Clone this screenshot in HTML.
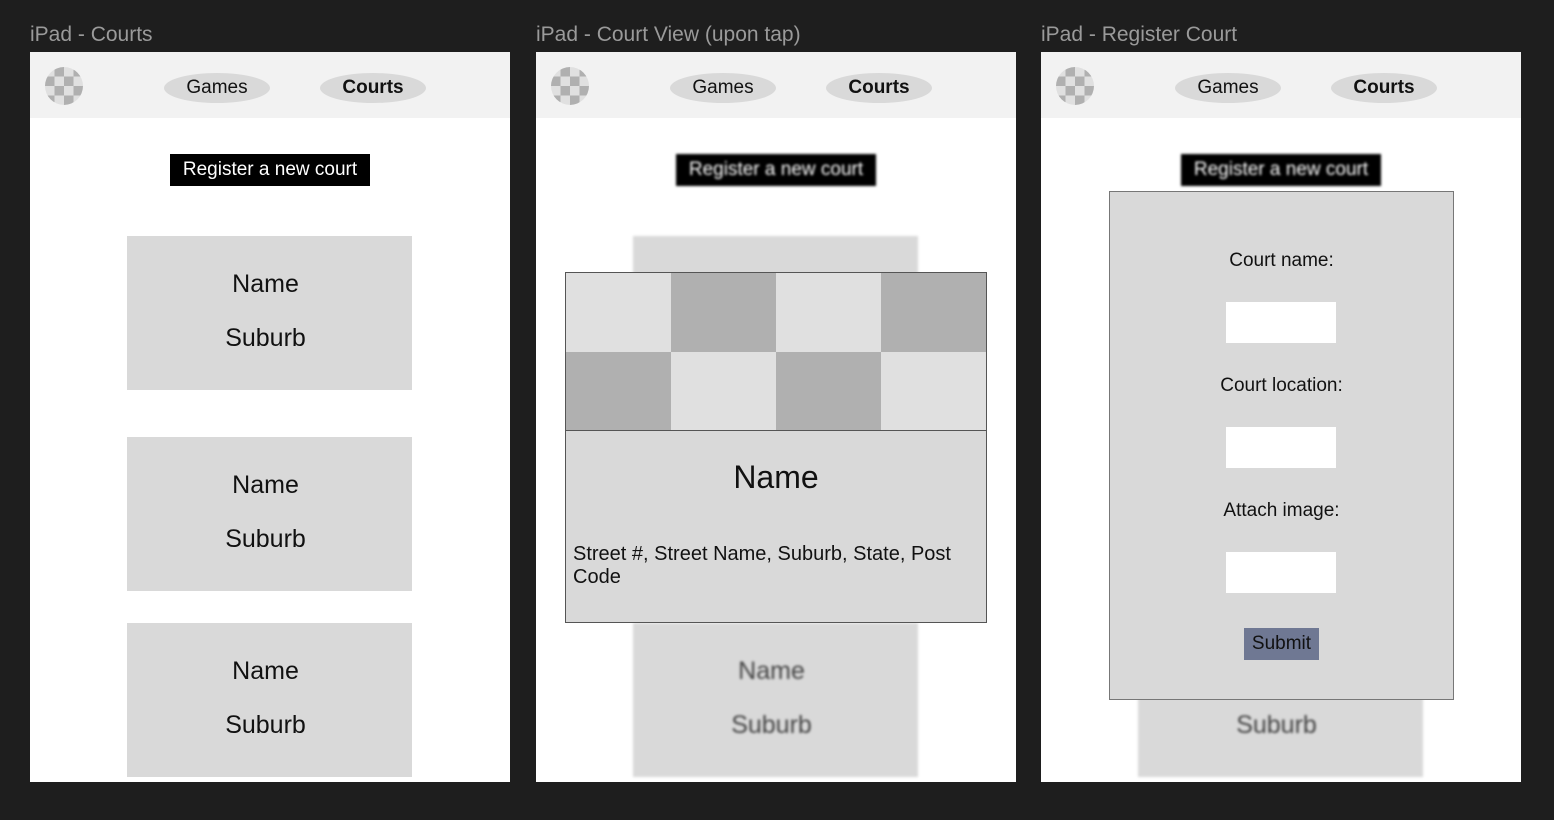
<!DOCTYPE html>
<html><head><meta charset="utf-8"><style>
*{margin:0;padding:0;box-sizing:border-box}
body{width:1554px;height:820px;background:#1e1e1e;position:relative;overflow:hidden;font-family:"Liberation Sans",sans-serif}
.a{position:absolute}
.title{color:#9a9a9a;font-size:21px;top:23px}
.frame{top:52px;width:480px;height:730px;background:#fff;overflow:hidden}
.hdr{left:0;top:0;width:480px;height:66px;background:#f2f2f2}
.logo{left:15px;top:15px;width:38px;height:38px;border-radius:50%;overflow:hidden;background:
 repeating-conic-gradient(#b0b0b0 0 25%,#e0e0e0 0 50%) 0 0/19px 19px}
.pill{top:21px;width:106px;height:30px;border-radius:50%;background:#d9d9d9;text-align:center;line-height:30px;font-size:19px;color:#111}
.reg{left:140px;top:102px;width:200px;height:32px;background:#000;color:#fff;font-size:19px;text-align:center;line-height:32px}
.card{left:97px;width:285px;height:154px;background:#d9d9d9;text-align:center;font-size:25px;color:#111}
.card .n{position:absolute;left:0;right:8px;top:34px}
.card .s{position:absolute;left:0;right:8px;top:88px}
.blur{filter:blur(1.3px)}
</style></head><body>
<div class="a title" style="left:30px">iPad - Courts</div>
<div class="a title" style="left:536px">iPad - Court View (upon tap)</div>
<div class="a title" style="left:1041px">iPad - Register Court</div>

<!-- frame 1 -->
<div class="a frame" style="left:30px">
 <div class="a hdr"></div>
 <div class="a logo"></div>
 <div class="a pill" style="left:134px">Games</div>
 <div class="a pill" style="left:290px;font-weight:bold">Courts</div>
 <div class="a reg">Register a new court</div>
 <div class="a card" style="top:184px"><div class="n">Name</div><div class="s">Suburb</div></div>
 <div class="a card" style="top:385px"><div class="n">Name</div><div class="s">Suburb</div></div>
 <div class="a card" style="top:571px"><div class="n">Name</div><div class="s">Suburb</div></div>
</div>

<!-- frame 2 -->
<div class="a frame" style="left:536px">
 <div class="a hdr"></div>
 <div class="a logo"></div>
 <div class="a pill" style="left:134px">Games</div>
 <div class="a pill" style="left:290px;font-weight:bold">Courts</div>
 <div class="a reg blur">Register a new court</div>
 <div class="a card blur" style="top:184px;color:#444"></div>
 <div class="a card blur" style="top:571px;color:#444"><div class="n">Name</div><div class="s">Suburb</div></div>
 <div class="a" style="left:29px;top:220px;width:422px;height:351px;border:1px solid #555;background:#d9d9d9">
  <div class="a" style="left:0;top:0;width:420px;height:158px;border-bottom:1px solid #555;background:
   repeating-conic-gradient(#b0b0b0 0 25%,#e0e0e0 0 50%) 0 0/210px 158px"></div>
  <div class="a" style="left:0;right:0;top:186px;text-align:center;font-size:32px;color:#111">Name</div>
  <div class="a" style="left:7px;top:270px;width:400px;font-size:20px;line-height:23px;color:#111">Street #, Street Name, Suburb, State, Post Code</div>
 </div>
</div>

<!-- frame 3 -->
<div class="a frame" style="left:1041px">
 <div class="a hdr"></div>
 <div class="a logo"></div>
 <div class="a pill" style="left:134px">Games</div>
 <div class="a pill" style="left:290px;font-weight:bold">Courts</div>
 <div class="a reg blur">Register a new court</div>
 <div class="a card blur" style="top:571px;color:#444"><div class="n">Name</div><div class="s">Suburb</div></div>
 <div class="a" style="left:68px;top:139px;width:345px;height:509px;border:1px solid #777;background:#d9d9d9;font-size:19px;color:#111;text-align:center">
  <div class="a" style="left:0;right:0;top:58px">Court name:</div>
  <div class="a" style="left:116px;top:110px;width:110px;height:41px;background:#fff"></div>
  <div class="a" style="left:0;right:0;top:183px">Court location:</div>
  <div class="a" style="left:116px;top:235px;width:110px;height:41px;background:#fff"></div>
  <div class="a" style="left:0;right:0;top:308px">Attach image:</div>
  <div class="a" style="left:116px;top:360px;width:110px;height:41px;background:#fff"></div>
  <div class="a" style="left:134px;top:436px;width:75px;height:32px;background:#6f7893;line-height:32px">Submit</div>
 </div>
</div>
</body></html>
